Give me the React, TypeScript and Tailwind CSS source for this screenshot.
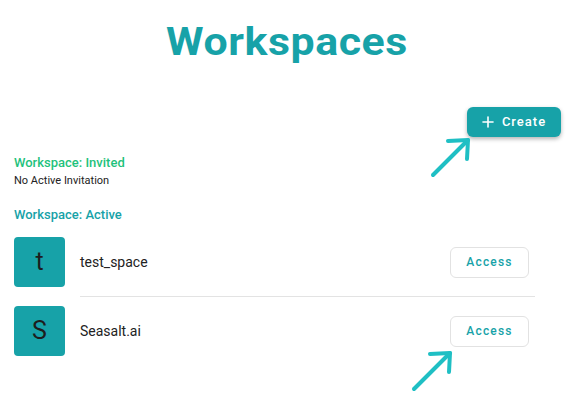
import React from 'react';

const workspaces = [
  { id: 'test_space', letter: 't', name: 'test_space' },
  { id: 'seasalt', letter: 'S', name: 'Seasalt.ai' },
];

const Arrow = ({ x1, y1, x2, y2 }: { x1: number; y1: number; x2: number; y2: number }) => (
  <g stroke="#1fbfc4" strokeWidth={4} strokeLinecap="round" strokeLinejoin="round" fill="none">
    <line x1={x1} y1={y1} x2={x2} y2={y2} />
    <polyline points={`${x2 - 20},${y2 + 1} ${x2},${y2} ${x2 - 1},${y2 + 19}`} />
  </g>
);

const App = () => {
  return (
    <div className="relative w-[570px] h-[414px] overflow-hidden bg-white font-['Roboto',sans-serif] text-[#222]">
      <div className="flex justify-center pt-[17px] pl-[4px]">
        <h1 className="scale-x-[1.1] text-[39px] font-bold leading-[50px] tracking-[0.5px] text-[#17a2a8]">Workspaces</h1>
      </div>

      <div className="mt-[40px] flex justify-end pr-[9px]">
        <button className="flex h-[30px] w-[94px] items-center justify-center gap-[8px] rounded-[6px] bg-[#17a2a8] text-[13px] font-medium tracking-[1px] text-white shadow-[0_2px_4px_rgba(0,0,0,0.3)]">
          <svg width="12" height="12" viewBox="0 0 12 12" stroke="white" strokeWidth="1.6" strokeLinecap="round">
            <line x1="6" y1="1" x2="6" y2="11" />
            <line x1="1" y1="6" x2="11" y2="6" />
          </svg>
          Create
        </button>
      </div>

      <div className="mt-[18px] px-[14px]">
        <p className="text-[13px] font-medium leading-[16px] text-[#1fc27c]">Workspace: Invited</p>
        <p className="mt-[3px] text-[11px] leading-[14px] text-[#222]">No Active Invitation</p>

        <p className="mt-[19px] text-[13px] font-medium leading-[16px] text-[#17a2a8]">Workspace: Active</p>

        <div className="mt-[14px] flex flex-col">
          {workspaces.map((ws, idx) => (
            <div key={ws.id}>
              {idx > 0 && <div className="my-[9px] ml-[66px] h-px w-[455px] bg-[#e3e3e3]" />}
              <div className="flex items-center gap-[15px]">
                <div className="flex h-[50px] w-[51px] items-center justify-center rounded-[4px] bg-[#17a2a8] text-[25px] text-[#1d1d1d]">
                  {ws.letter}
                </div>
                <div className="flex flex-1 items-center justify-between pr-[27px]">
                  <span className="text-[14px] text-[#222]">{ws.name}</span>
                  <button className="h-[31px] w-[79px] rounded-[6px] border border-[#e2e2e2] bg-white text-[12px] font-medium tracking-[1.2px] text-[#17a2a8]">
                    Access
                  </button>
                </div>
              </div>
            </div>
          ))}
        </div>
      </div>

      {/* pointer arrows */}
      <svg className="pointer-events-none absolute left-0 top-0" width="570" height="414">
        <Arrow x1={433} y1={175} x2={468} y2={140} />
        <Arrow x1={414} y1={389} x2={450} y2={353} />
      </svg>
    </div>
  );
};

export default App;
